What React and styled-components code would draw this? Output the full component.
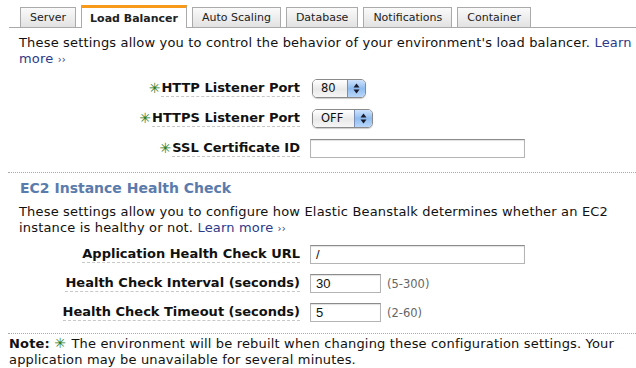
import React from 'react';
import styled, { createGlobalStyle } from 'styled-components';

const GlobalStyle = createGlobalStyle`
  body {
    margin: 0;
    background: #fff;
    font-family: "DejaVu Sans", Verdana, sans-serif;
    font-size: 13px;
    color: #111;
  }
`;

const Page = styled.div`
  width: 636px;
  height: 368px;
  padding: 5px 0 0 9px;
  box-sizing: border-box;
  overflow: hidden;
`;

const TabBar = styled.div`
  display: flex;
  align-items: flex-end;
  gap: 5px;
  height: 22px;
  padding-left: 11px;
  border-bottom: 1px solid #aaa;
`;

const Tab = styled.div`
  padding: 0 ${p => (p.active ? '8px' : '9px')};
  display: flex;
  align-items: center;
  font-size: 11px;
  font-weight: ${p => (p.active ? 'bold' : 'normal')};
  color: #222;
  border: 1px solid #aaa;
  border-bottom: none;
  border-top: ${p => (p.active ? '3px solid #f79a1a' : '1px solid #aaa')};
  background: ${p => (p.active ? '#fff' : 'linear-gradient(#fafafa, #e2e2e2)')};
  margin-bottom: ${p => (p.active ? '-1px' : '0')};
  height: ${p => (p.active ? '20px' : '19px')};
`;

const Section = styled.div`
  padding-left: 10px;
  margin-top: ${p => p.top || 0}px;
  line-height: 16px;
  letter-spacing: 0.17px;
`;

const Link = styled.span`
  color: #2c3a8a;
`;

const Chev = styled.span`
  font-size: 10px;
`;

const Form = styled.div`
  display: grid;
  grid-template-columns: 291px 1fr;
  grid-auto-rows: ${p => p.row}px;
  column-gap: 10px;
  align-items: center;
  margin-top: ${p => p.top || 0}px;
`;

const LabelCell = styled.div`
  justify-self: end;
  display: flex;
  align-items: center;
`;

const Star = styled.span`
  color: #2c7a1c;
  font-size: 14px;
  line-height: 1;
  margin-right: 1px;
  font-weight: normal;
`;

const Label = styled.span`
  font-weight: bold;
  font-size: 13px;
  border-bottom: 1px dashed #c8c8c8;
  padding-bottom: 1px;
  line-height: 15px;
`;

const ControlCell = styled.div`
  display: flex;
  align-items: center;
  gap: 6px;
`;

const Select = styled.div`
  width: ${p => p.w}px;
  height: 17px;
  margin-left: 2px;
  display: flex;
  border: 1px solid #8a8a8a;
  border-radius: 5px;
  overflow: hidden;
  box-shadow: 0 1px 1px rgba(0, 0, 0, 0.2);
  font-size: 11.5px;
`;

const SelectValue = styled.div`
  flex: 1;
  display: flex;
  align-items: center;
  padding-left: 8px;
  background: linear-gradient(#ffffff, #e9e9e9 55%, #f6f6f6);
`;

const SelectArrow = styled.div`
  width: 17px;
  display: flex;
  align-items: center;
  justify-content: center;
  border-left: 1px solid #7a8fb8;
  background: linear-gradient(#cfe3fb, #8fbcf0 50%, #b9d7fa);
`;

const TextInput = styled.div`
  width: ${p => p.w}px;
  height: 19px;
  box-sizing: border-box;
  border: 1px solid #b4b4b4;
  border-top-color: #8c8c8c;
  box-shadow: inset 0 1px 1px rgba(0, 0, 0, 0.12);
  padding-left: 5px;
  display: flex;
  align-items: center;
  font-family: "Liberation Sans", Arial, sans-serif;
  font-size: 13px;
`;

const Hint = styled.span`
  font-size: 11.5px;
  color: #666;
`;

const Divider = styled.div`
  border-top: 1px dotted #a8a8a8;
  margin-top: ${p => p.top || 0}px;
  margin-left: -1px;
`;

const Heading = styled.div`
  padding-left: 11px;
  margin-top: 6px;
  font-size: 14px;
  font-weight: bold;
  color: #5a7bab;
  line-height: 18px;
`;

const Note = styled.div`
  margin-top: 2px;
  line-height: 16px;
  letter-spacing: 0.17px;
`;

const Arrows = () => (
  <svg width="7" height="11" viewBox="0 0 7 11">
    <path d="M3.5 0.5 L6.5 4.5 H0.5 Z" fill="#1a1a2a" />
    <path d="M3.5 10.5 L6.5 6.5 H0.5 Z" fill="#1a1a2a" />
  </svg>
);

const Field = ({ star, label, children }) => (
  <>
    <LabelCell>
      {star && <Star>✳</Star>}
      <Label>{label}</Label>
    </LabelCell>
    <ControlCell>{children}</ControlCell>
  </>
);

const tabs = ['Server', 'Load Balancer', 'Auto Scaling', 'Database', 'Notifications', 'Container'];

export default function App() {
  return (
    <Page>
      <GlobalStyle />
      <TabBar>
        {tabs.map(t => (
          <Tab key={t} active={t === 'Load Balancer'}>{t}</Tab>
        ))}
      </TabBar>

      <Section top={7}>
        These settings allow you to control the behavior of your environment's load balancer.{' '}
        <Link>Learn more <Chev>››</Chev></Link>
      </Section>

      <Form row={30} top={5}>
        <Field star label="HTTP Listener Port">
          <Select w={52}>
            <SelectValue>80</SelectValue>
            <SelectArrow><Arrows /></SelectArrow>
          </Select>
        </Field>
        <Field star label="HTTPS Listener Port">
          <Select w={59}>
            <SelectValue>OFF</SelectValue>
            <SelectArrow><Arrows /></SelectArrow>
          </Select>
        </Field>
        <Field star label="SSL Certificate ID">
          <TextInput w={215} />
        </Field>
      </Form>

      <Divider top={9} />
      <Heading>EC2 Instance Health Check</Heading>

      <Section top={7}>
        These settings allow you to configure how Elastic Beanstalk determines whether an EC2
        instance is healthy or not. <Link>Learn more <Chev>››</Chev></Link>
      </Section>

      <Form row={29} top={3}>
        <Field label="Application Health Check URL">
          <TextInput w={215}>/</TextInput>
        </Field>
        <Field label="Health Check Interval (seconds)">
          <TextInput w={71}>30</TextInput>
          <Hint>(5-300)</Hint>
        </Field>
        <Field label="Health Check Timeout (seconds)">
          <TextInput w={71}>5</TextInput>
          <Hint>(2-60)</Hint>
        </Field>
      </Form>

      <Divider top={6} />
      <Note>
        <b>Note:</b> <Star>✳</Star> The environment will be rebuilt when changing these configuration settings. Your
        application may be unavailable for several minutes.
      </Note>
    </Page>
  );
}
